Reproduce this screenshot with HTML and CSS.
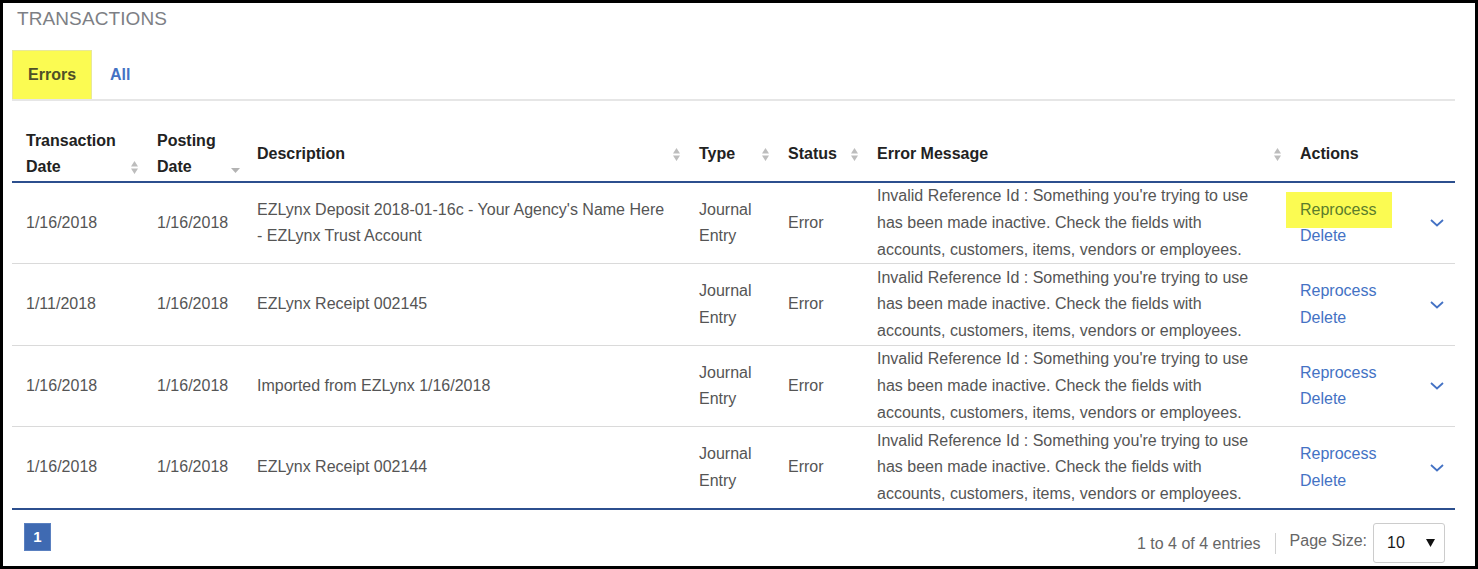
FILE: index.html
```html
<!DOCTYPE html>
<html>
<head>
<meta charset="utf-8">
<link rel="stylesheet" href="styles.css">
</head>
<body>
<div class="frame">
  <div class="title">TRANSACTIONS</div>
  <div class="tabs">
    <div class="tab tab-active">Errors</div>
    <div class="tab tab-link">All</div>
  </div>
  <table class="grid">
    <colgroup>
      <col class="c1"><col class="c2"><col class="c3"><col class="c4"><col class="c5"><col class="c6"><col class="c7"><col class="c8">
    </colgroup>
    <thead>
      <tr>
        <th><div class="th-in"><span>Transaction Date</span><svg class="sort" width="7" height="13" viewBox="0 0 7 13"><path d="M0 5.5L3.5 0L7 5.5Z M0 7.5L3.5 13L7 7.5Z" fill="#bdbdbd"/></svg></div></th>
        <th><div class="th-in"><span>Posting Date</span><svg class="sort-down" width="9" height="5" viewBox="0 0 9 5"><path d="M0 0L9 0L4.5 5Z" fill="#b3b3b3"/></svg></div></th>
        <th><div class="th-in"><span>Description</span><svg class="sort" width="7" height="13" viewBox="0 0 7 13"><path d="M0 5.5L3.5 0L7 5.5Z M0 7.5L3.5 13L7 7.5Z" fill="#bdbdbd"/></svg></div></th>
        <th><div class="th-in"><span>Type</span><svg class="sort" width="7" height="13" viewBox="0 0 7 13"><path d="M0 5.5L3.5 0L7 5.5Z M0 7.5L3.5 13L7 7.5Z" fill="#bdbdbd"/></svg></div></th>
        <th><div class="th-in"><span>Status</span><svg class="sort" width="7" height="13" viewBox="0 0 7 13"><path d="M0 5.5L3.5 0L7 5.5Z M0 7.5L3.5 13L7 7.5Z" fill="#bdbdbd"/></svg></div></th>
        <th><div class="th-in"><span>Error Message</span><svg class="sort" width="7" height="13" viewBox="0 0 7 13"><path d="M0 5.5L3.5 0L7 5.5Z M0 7.5L3.5 13L7 7.5Z" fill="#bdbdbd"/></svg></div></th>
        <th><div class="th-in"><span>Actions</span></div></th>
        <th></th>
      </tr>
    </thead>
    <tbody>
      <tr>
        <td>1/16/2018</td>
        <td>1/16/2018</td>
        <td class="desc">EZLynx Deposit 2018-01-16c - Your Agency's Name Here - EZLynx Trust Account</td>
        <td>Journal Entry</td>
        <td>Error</td>
        <td class="msg">Invalid Reference Id : Something you're trying to use has been made inactive. Check the fields with accounts, customers, items, vendors or employees.</td>
        <td class="actions"><div class="act act-hl">Reprocess</div><div class="act">Delete</div></td>
        <td class="chev"><svg width="14" height="8" viewBox="0 0 14 8"><path d="M1 1L7 6.5L13 1" fill="none" stroke="#4472c4" stroke-width="1.8"/></svg></td>
      </tr>
      <tr>
        <td>1/11/2018</td>
        <td>1/16/2018</td>
        <td class="desc">EZLynx Receipt 002145</td>
        <td>Journal Entry</td>
        <td>Error</td>
        <td class="msg">Invalid Reference Id : Something you're trying to use has been made inactive. Check the fields with accounts, customers, items, vendors or employees.</td>
        <td class="actions"><div class="act">Reprocess</div><div class="act">Delete</div></td>
        <td class="chev"><svg width="14" height="8" viewBox="0 0 14 8"><path d="M1 1L7 6.5L13 1" fill="none" stroke="#4472c4" stroke-width="1.8"/></svg></td>
      </tr>
      <tr>
        <td>1/16/2018</td>
        <td>1/16/2018</td>
        <td class="desc">Imported from EZLynx 1/16/2018</td>
        <td>Journal Entry</td>
        <td>Error</td>
        <td class="msg">Invalid Reference Id : Something you're trying to use has been made inactive. Check the fields with accounts, customers, items, vendors or employees.</td>
        <td class="actions"><div class="act">Reprocess</div><div class="act">Delete</div></td>
        <td class="chev"><svg width="14" height="8" viewBox="0 0 14 8"><path d="M1 1L7 6.5L13 1" fill="none" stroke="#4472c4" stroke-width="1.8"/></svg></td>
      </tr>
      <tr class="last">
        <td>1/16/2018</td>
        <td>1/16/2018</td>
        <td class="desc">EZLynx Receipt 002144</td>
        <td>Journal Entry</td>
        <td>Error</td>
        <td class="msg">Invalid Reference Id : Something you're trying to use has been made inactive. Check the fields with accounts, customers, items, vendors or employees.</td>
        <td class="actions"><div class="act">Reprocess</div><div class="act">Delete</div></td>
        <td class="chev"><svg width="14" height="8" viewBox="0 0 14 8"><path d="M1 1L7 6.5L13 1" fill="none" stroke="#4472c4" stroke-width="1.8"/></svg></td>
      </tr>
    </tbody>
  </table>
  <div class="footer">
    <div class="page-btn">1</div>
    <div class="info">1 to 4 of 4 entries</div>
    <div class="sep"></div>
    <div class="ps-label">Page Size:</div>
    <div class="select"><span>10</span><svg width="9" height="8" viewBox="0 0 9 8"><path d="M0 0L9 0L4.5 8Z" fill="#111"/></svg></div>
  </div>
</div>
</body>
</html>
```

FILE: styles.css
```css
html, body {
  margin: 0;
  padding: 0;
  background: #fff;
}
body {
  font-family: "Liberation Sans", Arial, sans-serif;
  font-size: 16px;
  color: #555;
}
.frame {
  width: 1478px;
  height: 569px;
  box-sizing: border-box;
  border: 3px solid #000;
  padding: 0 20px 0 9px;
  overflow: hidden;
}
.title {
  margin: 5px 0 0 5px;
  font-size: 19px;
  line-height: 22px;
  color: #7d7f85;
  letter-spacing: 0.1px;
}
.tabs {
  margin-top: 20px;
  display: flex;
  border-bottom: 2px solid #e6e6e6;
}
.tab {
  height: 49px;
  line-height: 49px;
  font-weight: bold;
  font-size: 16px;
}
.tab-active {
  box-sizing: border-box;
  width: 80px;
  padding-left: 15px;
  background: #fbfb52;
  color: #4f4f27;
  border: 1px solid #e8e89a;
  border-bottom: none;
  line-height: 48px;
}
.tab-link {
  padding-left: 18px;
  color: #4472c4;
}
.grid {
  margin-top: 20px;
  width: 100%;
  table-layout: fixed;
  border-collapse: separate;
  border-spacing: 0;
}
.c1 { width: 131px; }
.c2 { width: 100px; }
.c3 { width: 442px; }
.c4 { width: 89px; }
.c5 { width: 89px; }
.c6 { width: 423px; }
.c7 { width: 124px; }
.c8 { width: 45px; }
.grid th {
  text-align: left;
  vertical-align: middle;
  padding: 7px 5px 1px 14px;
  font-weight: bold;
  font-size: 16px;
  line-height: 26px;
  color: #222;
  border-bottom: 2px solid #2c4f8e;
}
.th-in {
  display: flex;
  justify-content: space-between;
  align-items: flex-end;
}
.th-in span {
  padding-right: 8px;
}
.sort {
  flex: none;
  margin-bottom: 6px;
}
.sort-down {
  flex: none;
  margin-bottom: 7px;
  margin-right: -2px;
}
.grid td {
  padding: 0.2px 4px 0.2px 14px;
  line-height: 26.7px;
  vertical-align: middle;
  border-bottom: 1px solid #dadada;
  color: #555;
}
.grid tr.last td {
  border-bottom: 2px solid #2c4f8e;
}
.grid td.desc {
  padding-right: 17px;
}
.grid td.msg {
  padding-right: 30px;
}
.act {
  color: #4472c4;
}
.act-hl {
  width: fit-content;
  margin: -4.5px 0 -4.5px -14px;
  padding: 4.5px 16px 4.5px 14px;
  background: #fbfb52;
  color: #5b7d2c;
}
.grid td.chev {
  padding: 0 0 0 20px;
  line-height: 0;
}
.footer {
  display: flex;
  align-items: flex-start;
  padding: 13px 10px 0 12px;
}
.page-btn {
  width: 27px;
  height: 28px;
  box-sizing: border-box;
  background: #3f6ab2;
  border: 1px solid #5a80c0;
  color: #fff;
  font-weight: bold;
  font-size: 15px;
  line-height: 26px;
  text-align: center;
}
.info {
  margin-left: auto;
  margin-top: 11px;
  line-height: 20px;
  color: #666;
}
.sep {
  width: 1px;
  height: 21px;
  margin: 10px 14px 0 14px;
  background: #d0d0d0;
}
.ps-label {
  margin-top: 8px;
  line-height: 20px;
  color: #666;
}
.select {
  margin-left: 6px;
  width: 72px;
  height: 40px;
  box-sizing: border-box;
  border: 1px solid #cccccc;
  border-radius: 3px;
  display: flex;
  align-items: center;
  justify-content: space-between;
  padding: 0 9px 0 13px;
  color: #1a1a1a;
  font-size: 16px;
}
```
